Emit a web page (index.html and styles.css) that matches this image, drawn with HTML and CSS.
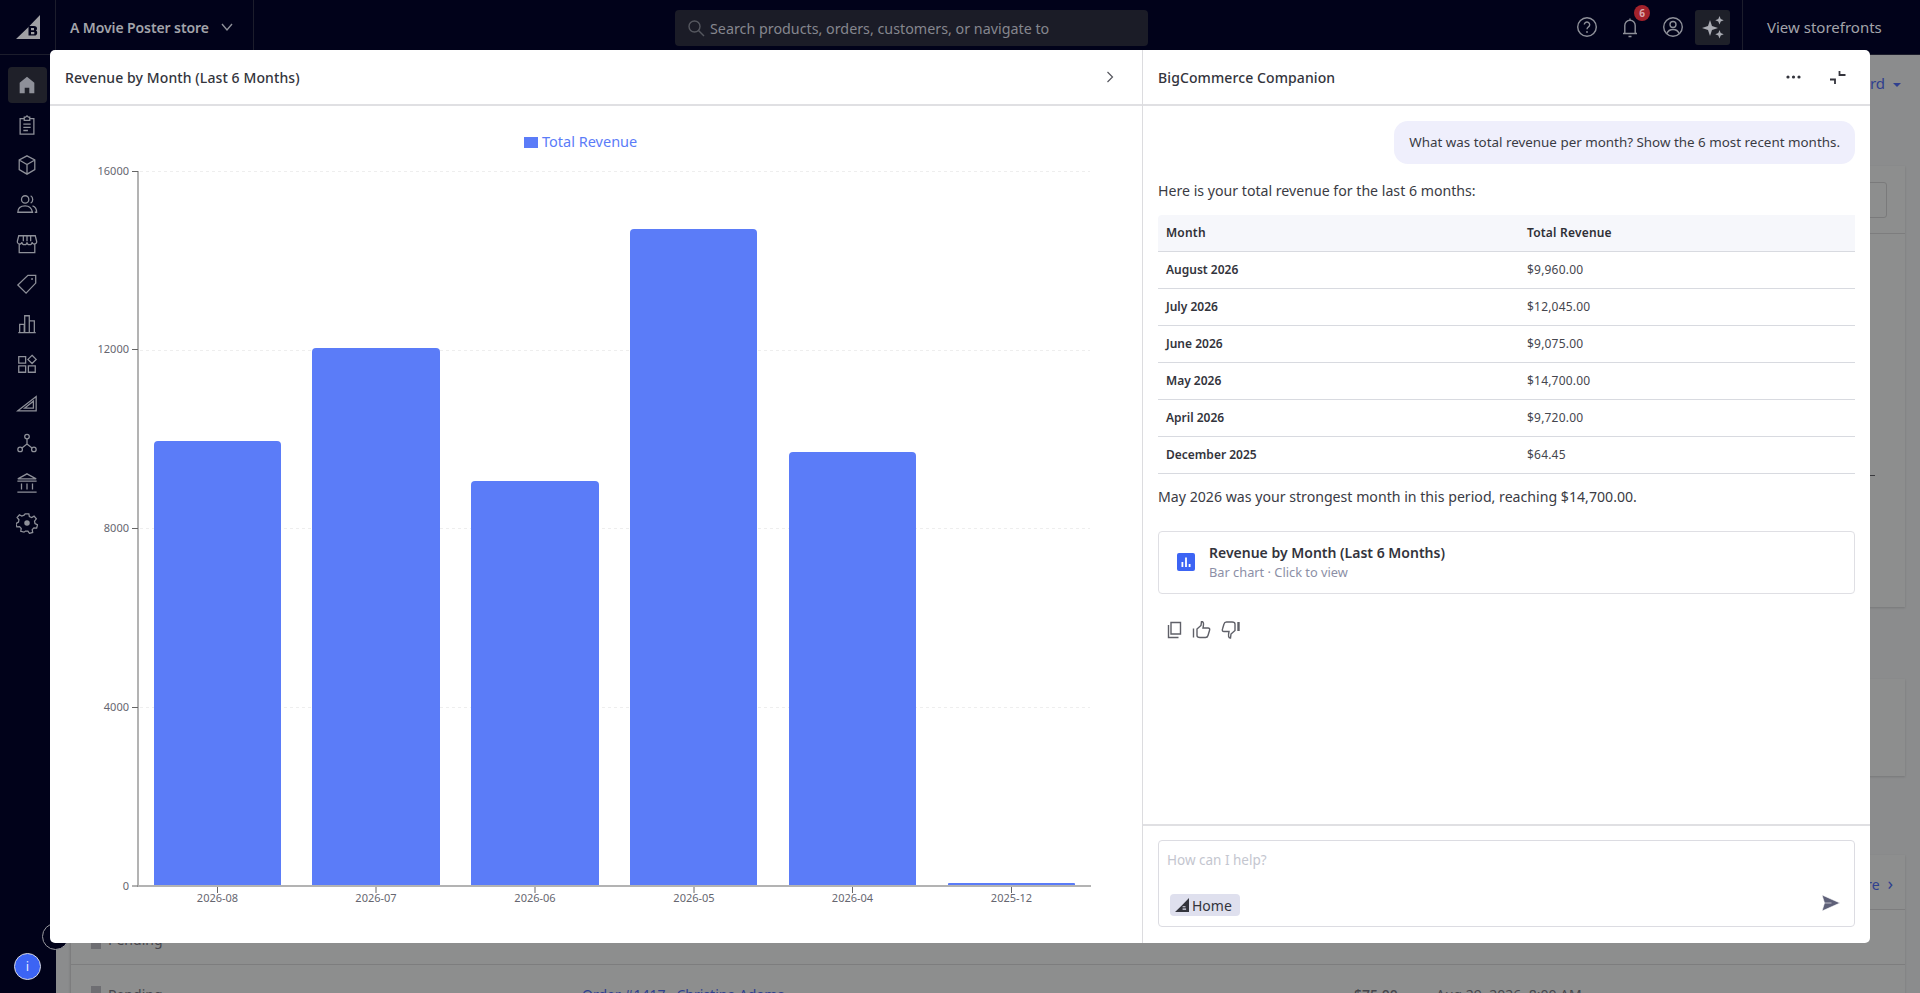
FILE: index.html
```html
<!DOCTYPE html>
<html lang="en">
<head>
    <meta charset="UTF-8">
    <title>A Movie Poster store</title>
    <link rel="stylesheet" href="styles.css">
</head>
<body>
    <header class="topbar">
        <div class="logo-cell">
            <svg width="24" height="24" viewBox="0 0 24 24"><path class="logo-fill" d="M24 0V24H0L12 12.500Z"/><path class="logo-cut" d="M12.500 11h5.500q3 0 3 2.500 0 1.500-1 2 1.200.5 1.200 2.200 0 2.800-3 2.800h-5.700ZM15 13v2.200h3V13ZM15 17v2.300h3.300V17Z"/></svg>
        </div>
        <div class="store-cell">
            <span class="store-name">A Movie Poster store</span>
            <svg width="14" height="14" viewBox="0 0 14 14"><path class="stroke" d="M2 4l5 6 5-6"/></svg>
        </div>
        <div class="search-wrap">
            <div class="search">
                <svg width="18" height="18" viewBox="0 0 18 18"><circle class="stroke-dim" cx="7.500" cy="7.500" r="5.500"/><path class="stroke-dim" d="M11.500 11.500l5.500 5.500"/></svg>
                <span>Search products, orders, customers, or navigate to</span>
            </div>
        </div>
        <div class="top-icons">
            <svg class="top-icon" width="24" height="24" viewBox="0 0 24 24"><circle class="stroke" cx="12" cy="12" r="9.300"/><path class="stroke" d="M9.300 9.600a2.700 2.700 0 1 1 4.200 2.300c-1 .7-1.500 1.200-1.500 2.400"/><circle class="dot" cx="12" cy="17" r=".9"/></svg>
            <div class="bell">
                <svg class="top-icon" width="24" height="24" viewBox="0 0 24 24"><path class="stroke" d="M5 18.500h14M6.800 18.500v-8a5.200 5.200 0 0 1 10.400 0v8M10.500 21.500h3M12 3.500v1.800"/></svg>
                <span class="badge">6</span>
            </div>
            <svg class="top-icon" width="24" height="24" viewBox="0 0 24 24"><circle class="stroke" cx="12" cy="12" r="9.300"/><circle class="stroke" cx="12" cy="9.500" r="3"/><path class="stroke" d="M6 18.500c1-3 3-4 6-4s5 1 6 4"/></svg>
            <div class="spark-btn">
                <svg width="24" height="24" viewBox="0 0 24 24"><path class="spark" d="M9 5l2 6 6 2-6 2-2 6-2-6-6-2 6-2ZM18.500 1l1.200 3 3 1.200-3 1.200-1.200 3-1.200-3-3-1.200 3-1.200ZM18.500 15l1.200 3 3 1.200-3 1.200-1.200 3-1.200-3-3-1.200 3-1.200Z"/></svg>
            </div>
        </div>
        <div class="storefronts">View storefronts</div>
    </header>

    <div class="shell">
        <nav class="sidenav">
            <div class="nav-item active"><svg width="24" height="24" viewBox="0 0 24 24"><path class="spark" d="M12 3l8 6.500V21h-5.500v-6h-5v6H4V9.500Z"/></svg></div>
            <div class="nav-item"><svg width="24" height="24" viewBox="0 0 24 24"><path class="stroke" d="M9 5H4.500v17h15V5H15M9 3.500h1.500L12 2l1.500 1.500H15V7H9ZM8 11h8M8 14.500h8M8 18h5"/></svg></div>
            <div class="nav-item"><svg width="24" height="24" viewBox="0 0 24 24"><path class="stroke" d="M12 2l8.500 4.500v10.500L12 22l-8.500-5V6.500ZM3.500 6.500L12 11.500l8.500-5M12 11.500V22"/></svg></div>
            <div class="nav-item"><svg width="24" height="24" viewBox="0 0 24 24"><circle class="stroke" cx="10" cy="7" r="4"/><path class="stroke" d="M2 21c0-5 3-7 8-7s7 2 8 7ZM16 3c3 1.500 3 6.500 0 8M18 14c3 1 4.500 3.500 4.500 7h-2"/></svg></div>
            <div class="nav-item"><svg width="24" height="24" viewBox="0 0 24 24"><path class="stroke" d="M3.500 12v9.500h17V12M3 3h18l1.500 6a2.500 2.500 0 0 1-5 1 2.500 2.500 0 0 1-5.500 0 2.500 2.500 0 0 1-5.500 0 2.500 2.500 0 0 1-5-1ZM8 3v6M12 3v6M16 3v6"/></svg></div>
            <div class="nav-item"><svg width="24" height="24" viewBox="0 0 24 24"><path class="stroke" d="M13 2.500h8.500V11L11 22 2 13Z"/><circle class="dot" cx="17.500" cy="6.500" r="1"/></svg></div>
            <div class="nav-item"><svg width="24" height="24" viewBox="0 0 24 24"><path class="stroke" d="M2.500 21.500h19M4 21.500v-9h5v9M9.500 21.500V3h5v18.500M14.500 21.500v-13h5.500v13"/></svg></div>
            <div class="nav-item"><svg width="24" height="24" viewBox="0 0 24 24"><path class="stroke" d="M3 4h7.500v7H3ZM3 14h7.500v7H3ZM13.500 14H21v7h-7.500ZM17.500 2.500l4.500 4.500-4.500 4.500L13 7Z"/></svg></div>
            <div class="nav-item"><svg width="24" height="24" viewBox="0 0 24 24"><path class="stroke" d="M2 20.500L22 5v15.500ZM9.500 17.500h9.500V10ZM2 20.500h20"/></svg></div>
            <div class="nav-item"><svg width="24" height="24" viewBox="0 0 24 24"><circle class="stroke" cx="12" cy="5" r="2.500"/><circle class="stroke" cx="4.500" cy="19" r="2.500"/><circle class="stroke" cx="19.500" cy="19" r="2.500"/><path class="stroke" d="M12 7.500V13l-5.500 4.500M12 13l5.500 4.500"/></svg></div>
            <div class="nav-item"><svg width="24" height="24" viewBox="0 0 24 24"><path class="stroke" d="M12 2l10 5.500H2ZM1.500 10h21M1.500 22h21M6 12.500V19M12 12.500V19M18 12.500V19"/></svg></div>
            <div class="nav-item"><svg width="24" height="24" viewBox="0 0 24 24"><path class="stroke" d="M10 2h4l.6 3 2.500 1 2.600-1.500 2.500 3-2 2.500.5 2.500 2.800 1.500-1 3.500-3-.2-1.800 2 .5 3-3.500 1-1.700-2.500h-2.600L8.700 22l-3.500-1 .5-3-1.800-2-3 .2-1-3.500L2.700 11l.5-2.500-2-2.500 2.500-3 2.600 1.500 2.500-1Z"/><circle class="dot" cx="12" cy="12" r="3"/></svg></div>
            <div class="nav-spacer"></div>
            <div class="info-dot">i</div>
        </nav>

        <main class="backdrop">
            <div class="back-link">Dashboard <span class="caret"></span></div>
            <section class="back-card card-a">
                <div class="card-a-head"><div class="back-input"></div></div>
                <div class="back-tick"></div>
            </section>
            <section class="back-card card-b"></section>
            <section class="back-card card-c">
                <div class="view-more">View more <span class="view-chev">›</span></div>
                <div class="back-row"><span class="square"></span>Pending</div>
                <div class="back-row">
                    <span class="square"></span><span class="status">Pending</span>
                    <span class="order">Order #1417 · Christina Adams</span>
                    <span class="amount">$75.00</span>
                    <span class="stamp">Aug 29, 2026, 8:00 AM</span>
                </div>
            </section>
        </main>
    </div>

    <div class="ring"></div>

    <div class="modal">
        <section class="chart-panel">
            <div class="panel-head">
                <span class="panel-title">Revenue by Month (Last 6 Months)</span>
                <svg width="16" height="16" viewBox="0 0 16 16"><path class="stroke-soft" d="M5.500 3l5 5-5 5"/></svg>
            </div>
            <div class="legend"><span class="legend-box"></span>Total Revenue</div>
            <svg class="chart" width="1092" height="837" viewBox="50 106 1092 837">
                <g class="grid">
                    <line x1="140" y1="171.500" x2="1090" y2="171.500"/>
                    <line x1="140" y1="350.500" x2="1090" y2="350.500"/>
                    <line x1="140" y1="528.500" x2="1090" y2="528.500"/>
                    <line x1="140" y1="707.500" x2="1090" y2="707.500"/>
                </g>
                <g class="bars">
                    <path d="M154 886V445a4 4 0 0 1 4-4h119a4 4 0 0 1 4 4V886Z"/>
                    <path d="M312 886V352a4 4 0 0 1 4-4h120a4 4 0 0 1 4 4V886Z"/>
                    <path d="M471 886V485a4 4 0 0 1 4-4h120a4 4 0 0 1 4 4V886Z"/>
                    <path d="M630 886V233a4 4 0 0 1 4-4h119a4 4 0 0 1 4 4V886Z"/>
                    <path d="M789 886V456a4 4 0 0 1 4-4h119a4 4 0 0 1 4 4V886Z"/>
                    <path d="M948 886V884a1 1 0 0 1 1-1h125a1 1 0 0 1 1 1V886Z"/>
                </g>
                <g class="axis">
                    <line x1="138" y1="171" x2="138" y2="887"/>
                    <line x1="137" y1="886" x2="1091" y2="886"/>
                </g>
                <g class="ticks">
                    <path d="M132 171.500h6M132 349.500h6M132 528.500h6M132 707.500h6M132 886h6M217.500 887v6M376 887v6M535 887v6M694 887v6M852.500 887v6M1011.500 887v6"/>
                </g>
                <g class="y-labels">
                    <text x="129" y="175">16000</text>
                    <text x="129" y="353">12000</text>
                    <text x="129" y="532">8000</text>
                    <text x="129" y="711">4000</text>
                    <text x="129" y="890">0</text>
                </g>
                <g class="x-labels">
                    <text x="217.500" y="902">2026-08</text>
                    <text x="376" y="902">2026-07</text>
                    <text x="535" y="902">2026-06</text>
                    <text x="694" y="902">2026-05</text>
                    <text x="852.500" y="902">2026-04</text>
                    <text x="1011.500" y="902">2025-12</text>
                </g>
            </svg>
        </section>

        <section class="chat-panel">
            <div class="panel-head chat-head">
                <span class="panel-title">BigCommerce Companion</span>
                <div class="chat-head-icons">
                    <svg width="18" height="6" viewBox="0 0 18 6"><circle class="dot-dark" cx="3" cy="3" r="1.600"/><circle class="dot-dark" cx="8.500" cy="3" r="1.600"/><circle class="dot-dark" cx="14" cy="3" r="1.600"/></svg>
                    <svg width="18" height="18" viewBox="0 0 18 18"><path class="stroke-dark" d="M10.500 3v4h6M1 11.500h5V16"/></svg>
                </div>
            </div>
            <div class="chat-body">
                <div class="bubble">What was total revenue per month? Show the 6 most recent months.</div>
                <p class="msg first">Here is your total revenue for the last 6 months:</p>
                <table class="rev-table">
                    <thead>
                        <tr><th>Month</th><th>Total Revenue</th></tr>
                    </thead>
                    <tbody>
                        <tr><td>August 2026</td><td>$9,960.00</td></tr>
                        <tr><td>July 2026</td><td>$12,045.00</td></tr>
                        <tr><td>June 2026</td><td>$9,075.00</td></tr>
                        <tr><td>May 2026</td><td>$14,700.00</td></tr>
                        <tr><td>April 2026</td><td>$9,720.00</td></tr>
                        <tr><td>December 2025</td><td>$64.45</td></tr>
                    </tbody>
                </table>
                <p class="msg second">May 2026 was your strongest month in this period, reaching $14,700.00.</p>
                <div class="artifact">
                    <svg width="18" height="18" viewBox="0 0 18 18"><rect class="art-bg" width="18" height="18" rx="2"/><path class="art-bars" d="M4.500 9h1.800v5H4.500ZM8.100 4.500h1.800V14H8.100ZM11.700 11h1.800v3h-1.800Z"/></svg>
                    <div>
                        <div class="art-title">Revenue by Month (Last 6 Months)</div>
                        <div class="art-sub">Bar chart · Click to view</div>
                    </div>
                </div>
                <div class="msg-actions">
                    <svg width="16" height="18" viewBox="0 0 16 18"><path class="stroke-grey" d="M5 1.500h9.500v11.500H5ZM2.500 4v12.500h10"/></svg>
                    <svg width="19" height="18" viewBox="0 0 19 18"><path class="stroke-grey" d="M1.500 7.500v9M5 8l4-3.500.500-4c2-.2 2.500 2 1.500 6.500h5c1.500 0 2 1 1.500 2.500l-1.500 5c-.4 1.500-1 2-2.500 2H8c-2 0-3-1-3-2Z"/></svg>
                    <svg width="19" height="18" viewBox="0 0 19 18"><path class="stroke-grey wide" d="M17.500 1v9"/><path class="stroke-grey" d="M14 9.500l-4 3.500-.500 4c-2 .2-2.500-2-1.500-6.500H3c-1.500 0-2-1-1.500-2.500l1.500-5c.4-1.500 1-2 2.500-2H11c2 0 3 1 3 2Z"/></svg>
                </div>
            </div>
            <div class="composer">
                <div class="input-box">
                    <div class="placeholder">How can I help?</div>
                    <div class="input-foot">
                        <div class="chip">
                            <svg width="14" height="14" viewBox="0 0 24 24"><path class="chip-logo" d="M24 0V24H0L12 12.500Z"/><path class="chip-cut" d="M13 14h5v2h-5ZM13 18h6v2h-6Z"/></svg>
                            Home
                        </div>
                        <svg class="send-icon" width="20" height="18" viewBox="0 0 20 18"><path class="send" d="M1 1l18 8-18 8 2.500-8Zm2.500 8h7"/></svg>
                    </div>
                </div>
            </div>
        </section>
    </div>
</body>
</html>
```

FILE: styles.css
```css
* {
    margin: 0;
    padding: 0;
    box-sizing: border-box;
}
html, body {
    height: 100%;
    overflow: hidden;
}
body {
    font-family: "Noto Sans", Arial, sans-serif;
    background-color: #8b8c8d;
    color: #2f3036;
    display: flex;
    flex-direction: column;
}
.stroke, .stroke-dim, .stroke-dark, .stroke-grey, .stroke-soft {
    fill: none;
    stroke-width: 1.4;
}
.stroke {
    stroke: #8e9099;
}
.stroke-dim {
    stroke: #55575f;
}
.stroke-dark {
    stroke: #33343c;
    stroke-width: 1.8;
}
.stroke-soft {
    stroke: #55565e;
    stroke-width: 1.2;
}
.stroke-grey {
    stroke: #5f6068;
}
.wide {
    stroke-width: 2.4;
}
.dot, .spark {
    fill: #8e9099;
}
.dot-dark {
    fill: #33343c;
}

/* top bar */
.topbar {
    height: 55px;
    flex: none;
    display: flex;
    background-color: #01021a;
    border-bottom: 1px solid #1c1d2c;
    color: #a3a4aa;
}
.logo-cell {
    width: 56px;
    flex: none;
    display: flex;
    align-items: center;
    justify-content: center;
    border-right: 1px solid #1c1d2c;
}
.logo-fill {
    fill: #a0a0a4;
}
.logo-cut {
    fill: #01021a;
    fill-rule: evenodd;
}
.store-cell {
    width: 198px;
    flex: none;
    padding-left: 14px;
    display: flex;
    align-items: center;
    gap: 11px;
    border-right: 1px solid #1c1d2c;
    font-size: 14px;
    font-weight: 600;
}
.store-name {
    white-space: nowrap;
    letter-spacing: -0.1px;
}
.search-wrap {
    flex: 1;
    padding: 10px 0 0 421px;
}
.search {
    width: 473px;
    height: 36px;
    border-radius: 4px;
    background-color: #1b1c27;
    display: flex;
    align-items: center;
    gap: 5px;
    padding-left: 12px;
    font-size: 14.300px;
    color: #85868e;
    white-space: nowrap;
}
.top-icons {
    flex: none;
    display: flex;
    align-items: center;
    gap: 19px;
    padding-right: 12px;
}
.top-icon {
    display: block;
    flex: none;
}
.bell {
    position: relative;
    flex: none;
}
.badge {
    position: absolute;
    top: -10px;
    right: -8px;
    width: 16px;
    height: 16px;
    border-radius: 50%;
    background-color: #a3222c;
    color: #d9a8ac;
    font-size: 10px;
    font-weight: 700;
    line-height: 16px;
    text-align: center;
}
.spark-btn {
    width: 35px;
    height: 35px;
    flex: none;
    margin-left: -9px;
    border-radius: 3px;
    background-color: #1e2029;
    display: flex;
    align-items: center;
    justify-content: center;
}
.spark-btn .spark {
    fill: #a9abb3;
}
.storefronts {
    width: 178px;
    flex: none;
    border-left: 1px solid #1c1d2c;
    font-size: 15px;
    line-height: 55px;
    padding-left: 24px;
    white-space: nowrap;
}

/* background page, dimmed by the modal overlay */
.shell {
    flex: 1;
    display: flex;
    min-height: 0;
}
.sidenav {
    width: 56px;
    flex: none;
    background-color: #01021a;
    display: flex;
    flex-direction: column;
    align-items: flex-start;
    padding: 12px 0 13px 8px;
}
.nav-item {
    width: 39px;
    height: 39.800px;
    flex: none;
    display: flex;
    align-items: center;
    justify-content: center;
    padding-right: 1px;
}
.nav-item.active {
    background-color: #1f2029;
    border-radius: 4px;
    height: 36px;
    margin-bottom: 2px;
}
.nav-item svg {
    width: 22px;
    height: 22px;
}
.nav-spacer {
    flex: 1;
}
.info-dot {
    width: 27px;
    height: 27px;
    margin-left: 6px;
    border-radius: 50%;
    border: 1px solid #d8d8e0;
    background-color: #3c64f4;
    color: #e6e9ff;
    font-size: 13px;
    line-height: 25px;
    text-align: center;
}
.ring {
    position: absolute;
    left: 42px;
    top: 923px;
    width: 27px;
    height: 27px;
    border: 1px solid #9a9aa0;
    border-radius: 50%;
    background-color: #01021a;
}
.backdrop {
    flex: 1;
    position: relative;
    padding: 18px 15px 0 14px;
    overflow: hidden;
    font-size: 14px;
    color: #4c4c52;
}
.back-link {
    text-align: right;
    color: #2f3f8f;
    font-size: 15px;
    line-height: 20px;
    padding-right: 4px;
    height: 93px;
    white-space: nowrap;
}
.caret {
    display: inline-block;
    margin-left: 4px;
    vertical-align: 2px;
    border: 4px solid transparent;
    border-top-color: #2f3f8f;
    border-bottom: 0;
}
.back-card {
    background-color: #8d8e8e;
    border-left: 1px solid #7d7d7e;
    box-shadow: 0 1px 2px rgba(0,0,0,0.15);
}
.card-a {
    position: relative;
    height: 441px;
    margin-bottom: 72px;
}
.card-a-head {
    height: 68px;
    border-bottom: 1px solid #7d7d7e;
    display: flex;
    justify-content: flex-end;
    padding: 16px 18px 0 0;
}
.back-input {
    width: 100px;
    height: 36px;
    border: 1px solid #7a7a7b;
    border-radius: 3px;
}
.back-tick {
    position: absolute;
    right: 30px;
    top: 309px;
    width: 5px;
    height: 1px;
    background-color: #3a3a3e;
}
.card-b {
    height: 97px;
    margin-bottom: 79px;
}
.card-c {
    height: 200px;
    color: #46464c;
}
.view-more {
    height: 55px;
    padding: 18px 12px 0 0;
    line-height: 20px;
    text-align: right;
    color: #2f3f8f;
    border-bottom: 1px solid #7d7d7e;
    white-space: nowrap;
}
.view-chev {
    font-size: 18px;
    line-height: 20px;
    margin-left: 4px;
}
.back-row {
    display: flex;
    align-items: center;
    height: 55px;
    padding: 5px 0 0 20px;
    border-bottom: 1px solid #7d7d7e;
    white-space: nowrap;
}
.square {
    width: 10px;
    height: 18px;
    background-color: #6e6e72;
    margin-right: 7px;
    flex: none;
}
.status {
    width: 474px;
}
.order {
    width: 772px;
    color: #2f3f8f;
}
.amount {
    width: 82px;
    font-weight: 500;
}

/* modal */
.modal {
    position: absolute;
    left: 50px;
    top: 50px;
    width: 1820px;
    height: 893px;
    background-color: #ffffff;
    border-radius: 5px;
    display: flex;
    overflow: hidden;
}
.chart-panel {
    width: 1093px;
    flex: none;
    position: relative;
    border-right: 1px solid #dcdcdf;
}
.chat-panel {
    flex: 1;
    display: flex;
    flex-direction: column;
    min-width: 0;
}
.panel-head {
    height: 56px;
    border-bottom: 2px solid #e0e0e3;
    display: flex;
    align-items: center;
    justify-content: space-between;
    padding: 0 24px 0 15px;
}
.panel-title {
    font-size: 14px;
    font-weight: 500;
    color: #33343c;
    letter-spacing: 0.1px;
    white-space: nowrap;
}
.chat-head {
    padding-right: 23px;
}
.chat-head-icons {
    display: flex;
    align-items: center;
    gap: 26px;
}
.legend {
    position: absolute;
    left: 474px;
    top: 81px;
    display: flex;
    align-items: center;
    gap: 4px;
    color: #5b7cf8;
    font-size: 14.500px;
    line-height: 20px;
    white-space: nowrap;
}
.legend-box {
    width: 14px;
    height: 11px;
    margin-top: 3px;
    background-color: #5b7cf8;
}
.chart {
    display: block;
}
.grid line {
    stroke: #eeeeee;
    stroke-dasharray: 3 3;
}
.bars path {
    fill: #5b7cf8;
}
.axis line {
    stroke: #b3b3b3;
    stroke-width: 2;
}
.ticks path {
    fill: none;
    stroke: #666666;
}
.y-labels text, .x-labels text {
    font-size: 11px;
    fill: #666670;
}
.y-labels text {
    text-anchor: end;
}
.x-labels text {
    text-anchor: middle;
}

/* chat */
.chat-body {
    flex: 1;
    min-height: 0;
    padding: 15px 15px 0 15px;
}
.bubble {
    width: fit-content;
    margin-left: auto;
    background-color: #efeffc;
    border-radius: 14px;
    height: 43px;
    line-height: 43px;
    padding: 0 15px;
    font-size: 13.400px;
    color: #3a3b44;
    white-space: nowrap;
}
.msg {
    font-size: 14.150px;
    color: #3a3b44;
    white-space: nowrap;
}
.first {
    margin-top: 17px;
    line-height: 20px;
}
.second {
    margin-top: 13px;
    line-height: 20px;
}
.rev-table {
    width: 697px;
    margin-top: 14px;
    border-collapse: collapse;
    table-layout: fixed;
    font-size: 12px;
}
.rev-table th {
    height: 36px;
    background-color: #f6f7fb;
    border-bottom: 1px solid #d8dae0;
    text-align: left;
    font-weight: 600;
    letter-spacing: 0.2px;
    padding-left: 8px;
}
.rev-table th:first-child {
    border-radius: 4px 0 0 0;
    width: 361px;
}
.rev-table td {
    height: 37px;
    border-bottom: 1px solid #d8dae0;
    padding-left: 8px;
    letter-spacing: 0.2px;
    color: #45464e;
}
.rev-table td:first-child {
    font-weight: 600;
    letter-spacing: 0;
    color: #33343c;
}
.artifact {
    margin-top: 24px;
    height: 63px;
    border: 1px solid #dfdfe4;
    border-radius: 4px;
    display: flex;
    align-items: center;
    gap: 14px;
    padding-left: 18px;
}
.art-bg {
    fill: #3c64f4;
}
.art-bars {
    fill: #ffffff;
}
.art-title {
    font-size: 14px;
    font-weight: 600;
    line-height: 20px;
    color: #33343c;
}
.art-sub {
    font-size: 12.800px;
    line-height: 18px;
    color: #8c8fa6;
}
.msg-actions {
    display: flex;
    align-items: center;
    gap: 10px;
    margin-top: 27px;
    padding-left: 8px;
}
.composer {
    height: 119px;
    flex: none;
    border-top: 2px solid #e0e0e3;
    padding: 14px 15px 0 15px;
}
.input-box {
    height: 87px;
    border: 1px solid #dcdce2;
    border-radius: 4px;
    padding: 9px 8px 0 8px;
    display: flex;
    flex-direction: column;
}
.placeholder {
    font-size: 13.500px;
    line-height: 20px;
    color: #c4c6cf;
}
.input-foot {
    margin-top: 24px;
    display: flex;
    align-items: center;
    justify-content: space-between;
    padding: 0 5px 0 3px;
}
.chip {
    width: 70px;
    height: 22px;
    border-radius: 4px;
    background-color: #dfe0ee;
    display: flex;
    align-items: center;
    gap: 3px;
    padding-left: 5px;
    font-size: 14px;
    color: #33343c;
}
.chip-logo {
    fill: #33343c;
}
.chip-cut {
    fill: #dfe0ee;
}
.send-icon {
    margin-bottom: 4px;
}
.send {
    fill: #5e6078;
    stroke: #ffffff;
    stroke-width: 0.6;
}
```
